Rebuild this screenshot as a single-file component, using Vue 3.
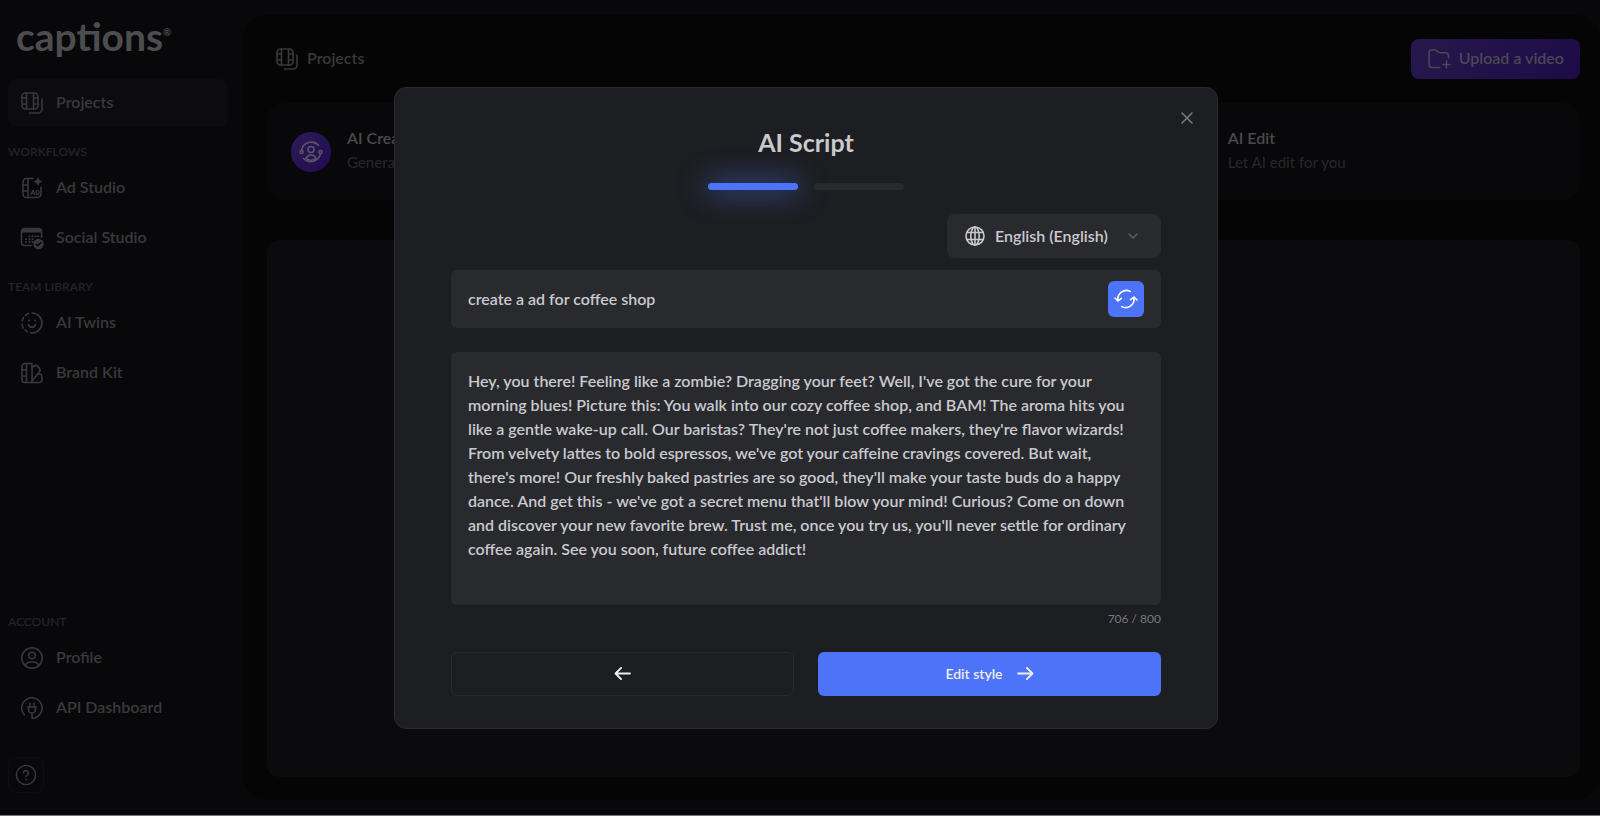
<template>
  <div class="app">
    <aside class="sidebar">
      <div class="logo">captions<sup>®</sup></div>

      <nav class="nav">
        <a href="#" class="navItem active">
          <svg class="icon" viewBox="0 0 24 24">
            <rect x="2" y="2" width="16" height="16" rx="3.5" />
            <path d="M6.5 2v16M13.5 2v16M2 7h4.500M2 13h4.500M13.500 7h4.500M13.500 13h4.500" />
            <path d="M22 8v10a4 4 0 0 1-4 4H9.500" />
          </svg>
          <span>Projects</span>
        </a>

        <h2 class="navTitle">WORKFLOWS</h2>
        <a href="#" class="navItem">
          <svg class="icon" viewBox="0 0 24 24">
            <path d="M13 2.500H6.500a3.500 3.500 0 0 0-3.500 3.500v12a3.500 3.500 0 0 0 3.500 3.500h11a3.500 3.500 0 0 0 3.500-3.500v-7" />
            <path d="M8 2.500v19M3 9h5M3 15h5" />
            <path class="solid" d="M18 1l1.400 3.100 3.100 1.400-3.100 1.400L18 10l-1.400-3.100L13.500 5.500l3.100-1.400z" />
            <path class="thin" d="M11 18.500l1.700-4h.5l1.500 4M11.800 17.200h2.400M16.300 14.500v4h.8a2 2 0 0 0 0-4z" />
          </svg>
          <span>Ad Studio</span>
        </a>
        <a href="#" class="navItem">
          <svg class="icon" viewBox="0 0 24 24">
            <path d="M11 19.500H4.500a3 3 0 0 1-3-3v-11a3 3 0 0 1 3-3h14a3 3 0 0 1 3 3v6" />
            <path class="solid" d="M1.500 6.500v-1a3 3 0 0 1 3-3h14a3 3 0 0 1 3 3v1z" />
            <path class="dots" d="M9.500 10.300h.1M12.500 10.300h.1M15.500 10.300h.1M18 10.300h.1M6 13.200h.1M9.500 13.200h.1M12.500 13.200h.1M6 16.100h.1M9.500 16.100h.1M12.500 16.100h.1" />
            <circle class="solid" cx="18.500" cy="18" r="5.200" />
            <path class="cut" d="M16.200 18.200l1.600 1.600 3-3.200" />
          </svg>
          <span>Social Studio</span>
        </a>

        <h2 class="navTitle">TEAM LIBRARY</h2>
        <a href="#" class="navItem">
          <svg class="icon" viewBox="0 0 24 24">
            <path d="M12 2a10 10 0 1 1-1.500 19.900" />
            <path d="M8.500 2.600a10 10 0 0 0-3 1.800M3.500 6.700a10 10 0 0 0-1.300 3.200M2.100 13.500a10 10 0 0 0 1 3.300M5 19.200a10 10 0 0 0 2.500 1.700" />
            <path d="M8.500 13.500a3.600 3.600 0 0 0 7 0" />
            <path class="dots" d="M9 9.500h.1M15 9.500h.1" />
          </svg>
          <span>AI Twins</span>
        </a>
        <a href="#" class="navItem">
          <svg class="icon" viewBox="0 0 24 24">
            <path d="M12 21.500H5a3 3 0 0 1-3-3v-13a3 3 0 0 1 3-3h7z" />
            <path d="M6.500 2.500v19M2 9h4.500M2 15h4.500" />
            <path d="M12 6.500l2-1.500a3 3 0 0 1 4 .5l1.500 2a3 3 0 0 1-.3 3.800L12 20" />
            <path d="M12 21.500h7a3 3 0 0 0 3-3v-2.500a3 3 0 0 0-3-3h-1.500" />
          </svg>
          <span>Brand Kit</span>
        </a>
      </nav>

      <nav class="nav account">
        <h2 class="navTitle">ACCOUNT</h2>
        <a href="#" class="navItem">
          <svg class="icon" viewBox="0 0 24 24">
            <circle cx="12" cy="12" r="10.200" />
            <circle cx="12" cy="9.500" r="3.300" />
            <path d="M5 19.300c1.500-2.400 4-3.600 7-3.600s5.500 1.200 7 3.600" />
          </svg>
          <span>Profile</span>
        </a>
        <a href="#" class="navItem">
          <svg class="icon" viewBox="0 0 24 24">
            <path d="M4.500 19A10.200 10.200 0 1 1 12 22.200V17" />
            <path d="M7.500 11h9M8.500 11v2.500a3.500 3.500 0 0 0 7 0V11M10 10.500V7M14 10.500V7" />
          </svg>
          <span>API Dashboard</span>
        </a>
      </nav>

      <button class="help" aria-label="Help">
        <svg class="icon" viewBox="0 0 24 24">
          <circle cx="12" cy="12" r="10.500" />
          <path d="M9.300 9.800a2.700 2.700 0 1 1 3.900 2.400c-.8.400-1.200.9-1.200 1.800" />
          <path class="dots" d="M12 16.800h.1" />
        </svg>
      </button>
    </aside>

    <main class="main">
      <header class="header">
        <h1 class="pageTitle">
          <svg class="icon" viewBox="0 0 24 24">
            <rect x="2" y="2" width="16" height="16" rx="3.5" />
            <path d="M6.5 2v16M13.5 2v16M2 7h4.500M2 13h4.500M13.500 7h4.500M13.500 13h4.500" />
            <path d="M22 8v10a4 4 0 0 1-4 4H9.500" />
          </svg>
          <span>Projects</span>
        </h1>
        <button class="upload">
          <svg class="icon" viewBox="0 0 24 24">
            <path d="M12.500 20.500H5a3 3 0 0 1-3-3v-12a2.500 2.500 0 0 1 2.500-2.500h3.300a3 3 0 0 1 2.200 1l.8.800a3 3 0 0 0 2.200.9H18.500a3 3 0 0 1 3 3V11" />
            <path d="M19.500 14v7M16 17.500h7" />
          </svg>
          <span>Upload a video</span>
        </button>
      </header>

      <section class="actions">
        <div v-for="action in actions" :key="action.title" class="action" :class="action.name">
          <div class="circle">
            <svg class="icon" viewBox="0 0 24 24">
              <circle cx="12" cy="9.500" r="3" />
              <path d="M7 18.300c1-2.200 2.800-3.300 5-3.300s4 1.100 5 3.300c-3 2.300-7 2.300-10 0z" />
              <path d="M2.500 10.300A10 10 0 0 1 19.500 5.200M21.500 13.700A10 10 0 0 1 4.500 18.500" />
              <circle cx="2.500" cy="12" r="1.500" />
              <circle cx="21.500" cy="12" r="1.500" />
            </svg>
          </div>
          <div class="actionText">
            <h3>{{ action.title }}</h3>
            <p>{{ action.text }}</p>
          </div>
        </div>
      </section>

      <section class="projects"></section>
    </main>

    <div class="overlay">
      <div class="modal" role="dialog" aria-labelledby="modalTitle">
        <button class="close" aria-label="Close">
          <svg viewBox="0 0 12 12">
            <path d="M1 1l10 10M11 1L1 11" />
          </svg>
        </button>

        <h2 id="modalTitle" class="modalTitle">AI Script</h2>
        <div class="steps">
          <div class="step done"></div>
          <div class="step"></div>
        </div>

        <div class="language">
          <svg class="globe" viewBox="0 0 20 20">
            <circle cx="10" cy="10" r="9" />
            <ellipse cx="10" cy="10" rx="4.200" ry="9" />
            <path d="M2 6.500h16M2 13.500h16M10 1v18" />
          </svg>
          <select v-model="language" aria-label="Language">
            <option>English (English)</option>
            <option>Spanish (Español)</option>
            <option>French (Français)</option>
          </select>
          <svg class="chevron" viewBox="0 0 10 6">
            <path d="M1 1l4 4 4-4" />
          </svg>
        </div>

        <div class="prompt">
          <input type="text" v-model="prompt" aria-label="Prompt" />
          <button class="refresh" aria-label="Generate again">
            <svg viewBox="0 0 24 24">
              <path d="M4 13.300a8.500 8.500 0 0 1 12.200-8.900M1 11l3 3 3.300-2.700" />
              <path d="M20 10.700a8.500 8.500 0 0 1-12.200 8.900M23 13l-3-3-3.300 2.700" />
            </svg>
          </button>
        </div>

        <textarea class="script" v-model="script" maxlength="800" aria-label="Script" spellcheck="false"></textarea>
        <p class="count">{{ script.length }} / 800</p>

        <div class="buttons">
          <button class="back" aria-label="Back">
            <svg viewBox="0 0 18 14">
              <path d="M17 7H2M7.500 1L1.500 7l6 6" />
            </svg>
          </button>
          <button class="next">
            <span>Edit style</span>
            <svg viewBox="0 0 18 14">
              <path d="M1 7h15M10.500 1l6 6-6 6" />
            </svg>
          </button>
        </div>
      </div>
    </div>
  </div>
</template>

<script setup>
import { ref } from "vue";

const actions = [
  { name: "creator", title: "AI Creator", text: "Generate a video" },
  { name: "edit", title: "AI Edit", text: "Let AI edit for you" },
];

let language = ref("English (English)");
let prompt = ref("create a ad for coffee shop");
let script = ref(
  "Hey, you there! Feeling like a zombie? Dragging your feet? Well, I've got the cure for your " +
    "morning blues! Picture this: You walk into our cozy coffee shop, and BAM! The aroma hits you " +
    "like a gentle wake-up call. Our baristas? They're not just coffee makers, they're flavor wizards! " +
    "From velvety lattes to bold espressos, we've got your caffeine cravings covered. But wait, " +
    "there's more! Our freshly baked pastries are so good, they'll make your taste buds do a happy " +
    "dance. And get this - we've got a secret menu that'll blow your mind! Curious? Come on down " +
    "and discover your new favorite brew. Trust me, once you try us, you'll never settle for ordinary " +
    "coffee again. See you soon, future coffee addict!"
);
</script>

<style>
body {
  margin: 0;
  background: #08080a;
}
</style>

<style scoped>
* {
  box-sizing: border-box;
  margin: 0;
  padding: 0;
}

.app {
  display: flex;
  min-height: 100vh;
  background: #08080a;
  border-bottom: 1px solid #77757a;
  font-family: Lato, "Open Sans", sans-serif;
  font-size: 16px;
  font-weight: 600;
  color: #39393b;
}

button,
input,
select,
textarea {
  border: none;
  outline: none;
  background: none;
  font: inherit;
  color: inherit;
}

button {
  cursor: pointer;
}

svg {
  display: block;
  flex: none;
  fill: none;
  stroke: currentColor;
  stroke-width: 1.6;
  stroke-linecap: round;
  stroke-linejoin: round;
}

.icon {
  width: 24px;
  height: 24px;
}

.solid {
  fill: currentColor;
  stroke: none;
}

.thin {
  stroke-width: 1.2;
}

.dots {
  stroke-width: 2;
}

.cut {
  stroke: #08080a;
}

.sidebar {
  display: flex;
  flex-direction: column;
  width: 243px;
  padding: 16px 16px 22px 8px;
}

.logo {
  display: flex;
  height: 63px;
  padding-left: 8px;
  font-size: 39px;
  font-weight: 700;
  line-height: 40px;
  color: #4d4d4e;
}

.logo sup {
  font-size: 10px;
  line-height: 32px;
}

.navItem {
  display: flex;
  align-items: center;
  gap: 12px;
  height: 48px;
  margin-bottom: 2px;
  padding: 0 12px;
  border-radius: 8px;
  color: inherit;
  text-decoration: none;
}

.navItem span,
.pageTitle span,
.upload span {
  padding-bottom: 3px;
}

.navItem.active {
  background: #0c0c0f;
}

.navTitle {
  padding: 15px 0 4px;
  font-size: 12px;
  font-weight: 600;
  line-height: 16px;
  color: #242427;
}

.account {
  margin-top: auto;
}

.help {
  display: flex;
  align-items: center;
  justify-content: center;
  width: 36px;
  height: 36px;
  margin-top: 23px;
  border: 1px solid #0e0e10;
  border-radius: 8px;
}

.help .icon {
  width: 22px;
  height: 22px;
}

.main {
  display: flex;
  flex: 1;
  flex-direction: column;
  margin: 15px 0;
  padding: 24px 20px 23px 24px;
  border-radius: 24px;
  background: #050505;
}

.header {
  display: flex;
  align-items: center;
  justify-content: space-between;
  padding-left: 8px;
}

.pageTitle {
  display: flex;
  align-items: center;
  gap: 8px;
  font-size: 16px;
  font-weight: 600;
}

.upload {
  display: flex;
  align-items: center;
  gap: 8px;
  height: 40px;
  padding: 0 16px;
  border-radius: 8px;
  background: linear-gradient(120deg, #27184c, #1d0b47);
  color: #4c4755;
}

.actions {
  display: grid;
  grid-template-columns: repeat(3, 1fr);
  gap: 8px;
  height: 97px;
  margin: 24px 0 40px;
  border-radius: 16px;
  background: #08080a;
}

.action {
  display: flex;
  align-items: center;
  gap: 16px;
  padding: 0 24px;
}

.action.edit {
  grid-column: 3;
}

.circle {
  display: flex;
  align-items: center;
  justify-content: center;
  width: 40px;
  height: 40px;
  border-radius: 50%;
  background: linear-gradient(135deg, #2d1b58, #200c51);
  color: #5b5566;
}

.actionText {
  padding-bottom: 3px;
}

.actionText h3 {
  font-size: 16px;
  font-weight: 600;
  line-height: 24px;
  color: #4a4a4b;
}

.actionText p {
  font-size: 15px;
  font-weight: 500;
  line-height: 24px;
  color: #252527;
}

.projects {
  flex: 1;
  border-radius: 12px;
  background: #0b0b0d;
}

.overlay {
  position: fixed;
  inset: 0;
  display: flex;
  align-items: center;
  justify-content: center;
  padding: 0 0 1px 12px;
}

.modal {
  position: relative;
  width: 824px;
  max-width: 100%;
  padding: 40px 56px 32px;
  border: 1px solid #2a2b2f;
  border-radius: 12px;
  background: #1d1e21;
  color: #c9c9ce;
}

.close {
  position: absolute;
  top: 18px;
  right: 18px;
  padding: 6px;
  color: #77787d;
}

.close svg {
  width: 12px;
  height: 12px;
}

.modalTitle {
  font-size: 25px;
  font-weight: 700;
  line-height: 28px;
  text-align: center;
}

.steps {
  display: flex;
  justify-content: center;
  gap: 16px;
  margin: 27px 0 24px;
}

.step {
  width: 90px;
  height: 7px;
  border-radius: 4px;
  background: #292a2e;
}

.step.done {
  background: #4d73f8;
  box-shadow: 0 0 28px 2px rgba(77, 115, 248, 0.7);
}

.language {
  display: flex;
  align-items: center;
  gap: 10px;
  width: 214px;
  height: 44px;
  margin-left: auto;
  padding: 0 23px 0 18px;
  border-radius: 8px;
  background: #292a2e;
}

.language select {
  flex: 1;
  min-width: 0;
  appearance: none;
}

.globe {
  width: 20px;
  height: 20px;
}

.chevron {
  width: 10px;
  height: 6px;
  color: #5c5d62;
}

.prompt {
  display: flex;
  align-items: center;
  height: 58px;
  margin: 12px 0 24px;
  padding: 0 17px;
  border-radius: 6px;
  background: #292a2e;
}

.prompt input {
  flex: 1;
}

.refresh {
  display: flex;
  align-items: center;
  justify-content: center;
  width: 36px;
  height: 36px;
  border-radius: 6px;
  background: #4d73f8;
  color: #fff;
}

.refresh svg {
  width: 24px;
  height: 24px;
}

.script {
  display: block;
  width: 100%;
  height: 253px;
  padding: 17px 24px 16px 17px;
  border-radius: 6px;
  background: #292a2e;
  line-height: 24px;
  resize: none;
}

.count {
  margin: 6px 0 25px;
  font-size: 12px;
  font-weight: 400;
  line-height: 16px;
  text-align: right;
  color: #77787d;
}

.buttons {
  display: grid;
  grid-template-columns: 1fr 1fr;
  gap: 24px;
}

.buttons button {
  display: flex;
  align-items: center;
  justify-content: center;
  gap: 14px;
  height: 44px;
  border-radius: 6px;
  color: #eeeef2;
}

.buttons svg {
  width: 17px;
  height: 13px;
  stroke-width: 2;
}

.buttons .back {
  border: 1px solid #292a2e;
}

.buttons .next {
  background: #4d73f8;
  font-size: 14px;
}
</style>
